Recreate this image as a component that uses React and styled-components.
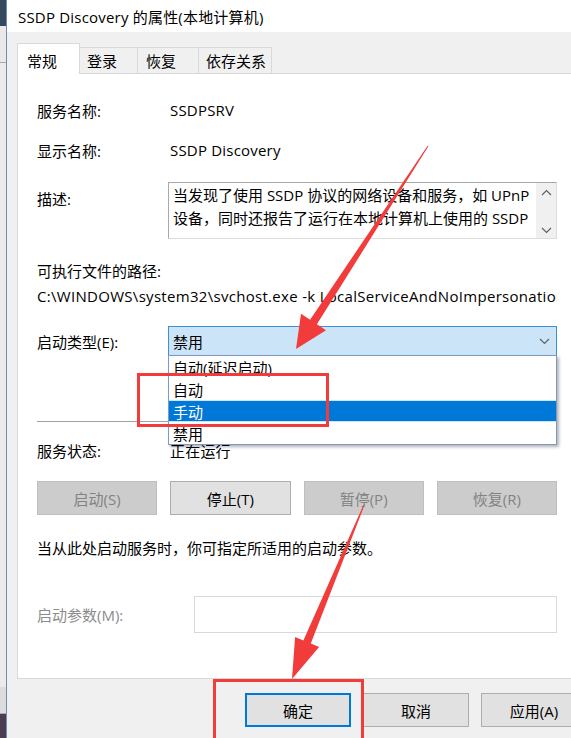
import React from "react";
import styled, { createGlobalStyle } from "styled-components";

const GlobalStyle = createGlobalStyle`
  html, body {
    margin: 0;
    padding: 0;
    background: #f0f0f0;
    overflow: hidden;
  }
  body {
    font-family: "Open Sans", "Noto Sans CJK SC", sans-serif;
    color: #000;
  }
`;

const Screen = styled.div`
  position: relative;
  display: flex;
  width: 571px;
  height: 738px;
  overflow: hidden;
`;

const BackStrip = styled.div`
  width: 6px;
  display: flex;
  flex-direction: column;
  background: #e6e6e6;
`;

const StripPart = styled.div`
  height: ${(p) => p.$h}px;
  flex: ${(p) => (p.$grow ? 1 : "none")};
  background: ${(p) => p.$bg};
  border-bottom: ${(p) => (p.$line ? "1px solid #a9a9a9" : "none")};
`;

const Window = styled.div`
  flex: 1;
  display: flex;
  flex-direction: column;
  border-left: 1px solid #6f8db2;
  background: #f0f0f0;
  overflow: hidden;
`;

const TitleBar = styled.div`
  height: 32px;
  flex: none;
  display: flex;
  align-items: center;
  padding-left: 11px;
  background: #fff;
  font-size: 15px;
  letter-spacing: 0.2px;
  white-space: nowrap;
`;

const Body = styled.div`
  padding: 11px 0 0 10px;
  display: flex;
  flex-direction: column;
`;

const TabStrip = styled.div`
  display: flex;
  align-items: flex-end;
  height: 31px;
  margin-bottom: -1px;
  position: relative;
  z-index: 1;
`;

const Tab = styled.div`
  width: ${(p) => p.$w}px;
  height: ${(p) => (p.$active ? 31 : 27)}px;
  box-sizing: border-box;
  padding-left: ${(p) => p.$pad}px;
  padding-top: ${(p) => (p.$active ? 3 : 0)}px;
  display: flex;
  align-items: center;
  font-size: 15px;
  background: ${(p) => (p.$active ? "#fff" : "#f0f0f0")};
  border: 1px solid #d9d9d9;
  border-bottom: ${(p) => (p.$active ? "none" : "1px solid #d9d9d9")};
  margin-left: ${(p) => (p.$first ? 0 : -1)}px;
`;

const Panel = styled.div`
  width: 600px;
  height: 606px;
  box-sizing: border-box;
  background: #fff;
  border: 1px solid #d9d9d9;
  padding: 24px 0 0 19px;
  display: flex;
  flex-direction: column;
`;

const Row = styled.div`
  width: 520px;
  display: flex;
  align-items: ${(p) => (p.$top ? "flex-start" : "center")};
  min-height: 24px;
  margin-top: ${(p) => p.$mt || 0}px;
  font-size: 15px;
  white-space: nowrap;
`;

const Label = styled.div`
  width: ${(p) => p.$w || 131}px;
  flex: none;
  color: ${(p) => (p.$muted ? "#8c8c8c" : "#000")};
  padding-top: ${(p) => p.$pt || 0}px;
`;

const Value = styled.div`
  padding-left: 2px;
  letter-spacing: 0.2px;
`;

const PathText = styled.div`
  width: 520px;
  overflow: hidden;
  white-space: nowrap;
  letter-spacing: 0.3px;
`;

const DescBox = styled.div`
  flex: 1;
  height: 57px;
  box-sizing: border-box;
  display: flex;
  border: 1px solid #a9a9a9;
  border-right-color: #dcdcdc;
  border-bottom-color: #dcdcdc;
`;

const DescText = styled.div`
  flex: 1;
  padding: 1px 0 0 4px;
  line-height: 23px;
  overflow: hidden;
`;

const ScrollBar = styled.div`
  width: 20px;
  background: #f0f0f0;
  display: flex;
  flex-direction: column;
  justify-content: space-between;
  align-items: center;
  padding: 6px 0 4px;
`;

const Combo = styled.div`
  position: relative;
  flex: 1;
  height: 30px;
  box-sizing: border-box;
  display: flex;
  align-items: center;
  justify-content: space-between;
  padding: 0 6px 0 4px;
  background: #cce4f7;
  border: 1px solid #3c8fd8;
`;

const DropList = styled.div`
  position: absolute;
  top: 100%;
  left: -1px;
  right: -1px;
  background: #fff;
  border: 1px solid #7a9cc4;
  box-shadow: 2px 2px 3px rgba(0, 0, 0, 0.3);
  z-index: 5;
`;

const DropItem = styled.div`
  height: 22px;
  display: flex;
  align-items: center;
  padding-left: 4px;
  background: ${(p) => (p.$sel ? "#0078d7" : "#fff")};
  color: ${(p) => (p.$sel ? "#fff" : "#000")};
  border-top: ${(p) => (p.$sel ? "1px solid #cce4f7" : "none")};
  border-bottom: ${(p) => (p.$sel ? "1px solid #cce4f7" : "none")};
  box-sizing: border-box;
`;

const Separator = styled.div`
  width: 520px;
  height: 1px;
  background: #a0a0a0;
  margin-top: ${(p) => p.$mt}px;
`;

const ButtonGrid = styled.div`
  width: 520px;
  display: grid;
  grid-template-columns: repeat(4, 1fr);
  gap: 13px;
  margin-top: 19px;
`;

const Button = styled.div`
  height: 34px;
  box-sizing: border-box;
  display: flex;
  align-items: center;
  justify-content: center;
  font-size: 15px;
  background: ${(p) => (p.$disabled ? "#cccccc" : "#e1e1e1")};
  color: ${(p) => (p.$disabled ? "#838383" : "#000")};
  border: ${(p) =>
    p.$focus ? "2px solid #0078d7" : p.$disabled ? "1px solid #bfbfbf" : "1px solid #adadad"};
  white-space: nowrap;
`;

const ParamInput = styled.div`
  flex: 1;
  height: 37px;
  box-sizing: border-box;
  border: 1px solid #d9d9d9;
`;

const Footer = styled.div`
  display: grid;
  grid-template-columns: 106px 106px 106px;
  column-gap: 12px;
  margin: 14px 0 0 228px;
`;

const Overlay = styled.svg`
  position: absolute;
  left: 0;
  top: 0;
  pointer-events: none;
  z-index: 10;
`;

function Chevron({ up }) {
  return (
    <svg width="11" height="7" viewBox="0 0 11 7">
      <path
        d={up ? "M1 6 L5.5 1.5 L10 6" : "M1 1 L5.5 5.5 L10 1"}
        fill="none"
        stroke="#606060"
        strokeWidth="1.2"
      />
    </svg>
  );
}

function Annotations() {
  const red = "#f23b3b";
  return (
    <Overlay width="571" height="738" viewBox="0 0 571 738">
      <rect x="138.5" y="374.5" width="189" height="51" fill="none" stroke={red} strokeWidth="3" />
      <rect x="214.5" y="680.5" width="148" height="70" fill="none" stroke={red} strokeWidth="3" />
      <polygon
        fill={red}
        points="428.4,146.3 316.9,324.2 326,330.2 296,349 301,313.8 310.1,319.8 427.6,145.7"
      />
      <polygon
        fill={red}
        points="364.5,505.2 310.8,643.5 319.1,646.9 292,679 295.1,637.1 303.4,640.5 363.5,504.8"
      />
    </Overlay>
  );
}

export default function App() {
  return (
    <Screen>
      <GlobalStyle />
      <BackStrip>
        <StripPart $h={26} $bg="#34495e" />
        <StripPart $h={36} $bg="#e9e9e9" $line />
        <StripPart $grow $bg="#ebebeb" />
        <StripPart $h={26} $bg="#dcdcdc" $line />
        <StripPart $h={24} $bg="#4a3d52" />
      </BackStrip>
      <Window>
        <TitleBar>SSDP Discovery 的属性(本地计算机)</TitleBar>
        <Body>
          <TabStrip>
            <Tab $active $first $w={63} $pad={9}>常规</Tab>
            <Tab $w={59} $pad={7}>登录</Tab>
            <Tab $w={62} $pad={8}>恢复</Tab>
            <Tab $w={74} $pad={7}>依存关系</Tab>
          </TabStrip>
          <Panel>
            <Row>
              <Label>服务名称:</Label>
              <Value>SSDPSRV</Value>
            </Row>
            <Row $mt={16}>
              <Label>显示名称:</Label>
              <Value>SSDP Discovery</Value>
            </Row>
            <Row $mt={20} $top>
              <Label $pt={6}>描述:</Label>
              <DescBox>
                <DescText>
                  当发现了使用 SSDP 协议的网络设备和服务，如 UPnP
                  <br />
                  设备，同时还报告了运行在本地计算机上使用的 SSDP
                </DescText>
                <ScrollBar>
                  <Chevron up />
                  <Chevron />
                </ScrollBar>
              </DescBox>
            </Row>
            <Row $mt={19}>
              <Label $w={200}>可执行文件的路径:</Label>
            </Row>
            <Row $mt={2}>
              <PathText>C:\WINDOWS\system32\svchost.exe -k LocalServiceAndNoImpersonation</PathText>
            </Row>
            <Row $mt={18}>
              <Label>启动类型(E):</Label>
              <Combo>
                <span>禁用</span>
                <Chevron />
                <DropList>
                  <DropItem>自动(延迟启动)</DropItem>
                  <DropItem>自动</DropItem>
                  <DropItem $sel>手动</DropItem>
                  <DropItem>禁用</DropItem>
                </DropList>
              </Combo>
            </Row>
            <Separator $mt={65} />
            <Row $mt={16}>
              <Label>服务状态:</Label>
              <Value>正在运行</Value>
            </Row>
            <ButtonGrid>
              <Button $disabled>启动(S)</Button>
              <Button>停止(T)</Button>
              <Button $disabled>暂停(P)</Button>
              <Button $disabled>恢复(R)</Button>
            </ButtonGrid>
            <Row $mt={20}>当从此处启动服务时，你可指定所适用的启动参数。</Row>
            <Row $mt={37}>
              <Label $w={157} $muted>启动参数(M):</Label>
              <ParamInput />
            </Row>
          </Panel>
          <Footer>
            <Button $focus>确定</Button>
            <Button>取消</Button>
            <Button>应用(A)</Button>
          </Footer>
        </Body>
      </Window>
      <Annotations />
    </Screen>
  );
}
